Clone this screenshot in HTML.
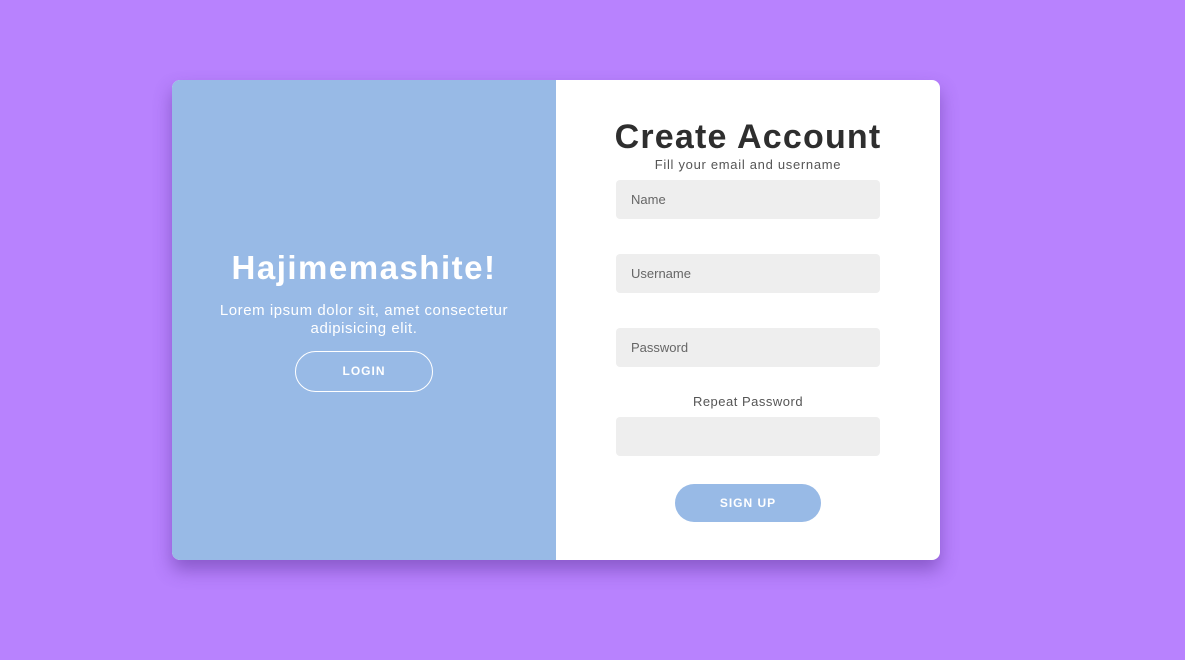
<!DOCTYPE html>
<html><head><style>
*{margin:0;padding:0;box-sizing:border-box}
body{width:1185px;height:660px;background:#b882fe;font-family:"Liberation Sans",sans-serif;position:relative;overflow:hidden}
.card{position:absolute;left:172px;top:80px;width:768px;height:480px;border-radius:8px;background:#fff;overflow:hidden;box-shadow:0 10px 18px rgba(80,40,140,.45)}
.left{position:absolute;left:0;top:0;width:384px;height:480px;background:#98bae6;color:#fff;text-align:center}
.left h1{position:absolute;top:169px;width:100%;font-size:33px;font-weight:bold;letter-spacing:1.5px}
.left p{position:absolute;top:222px;left:20px;width:344px;font-size:15px;line-height:18px;letter-spacing:0.55px}
.login{position:absolute;left:123px;top:271px;width:138px;height:41px;border:1px solid #fff;border-radius:21px;font-size:12px;font-weight:bold;letter-spacing:1px;line-height:39px}
.right{position:absolute;left:444px;top:0;width:264px}
.right h2{position:absolute;top:38px;left:-20px;width:304px;text-align:center;font-size:34px;font-weight:bold;color:#2e2e2e;white-space:nowrap;letter-spacing:1.2px}
.sub{position:absolute;top:77px;left:-20px;width:304px;text-align:center;font-size:13px;color:#555;letter-spacing:0.7px}
.in{position:absolute;left:0;width:264px;height:39px;background:#eee;border-radius:4px;font-size:13px;color:#666;padding-left:15px;line-height:39px}
.rp{position:absolute;top:314px;width:100%;text-align:center;font-size:13px;color:#555;letter-spacing:0.5px}
.su{position:absolute;left:59px;top:404px;width:146px;height:38px;background:#98bae6;border-radius:19px;color:#fff;font-size:12px;font-weight:bold;letter-spacing:1px;text-align:center;line-height:38px}
</style></head><body>
<div class="card">
 <div class="left">
  <h1>Hajimemashite!</h1>
  <p>Lorem ipsum dolor sit, amet consectetur<br>adipisicing elit.</p>
  <div class="login">LOGIN</div>
 </div>
 <div class="right">
  <h2>Create Account</h2>
  <div class="sub">Fill your email and username</div>
  <div class="in" style="top:100px">Name</div>
  <div class="in" style="top:174px">Username</div>
  <div class="in" style="top:248px">Password</div>
  <div class="rp">Repeat Password</div>
  <div class="in" style="top:337px"></div>
  <div class="su">SIGN UP</div>
 </div>
</div>
</body></html>
